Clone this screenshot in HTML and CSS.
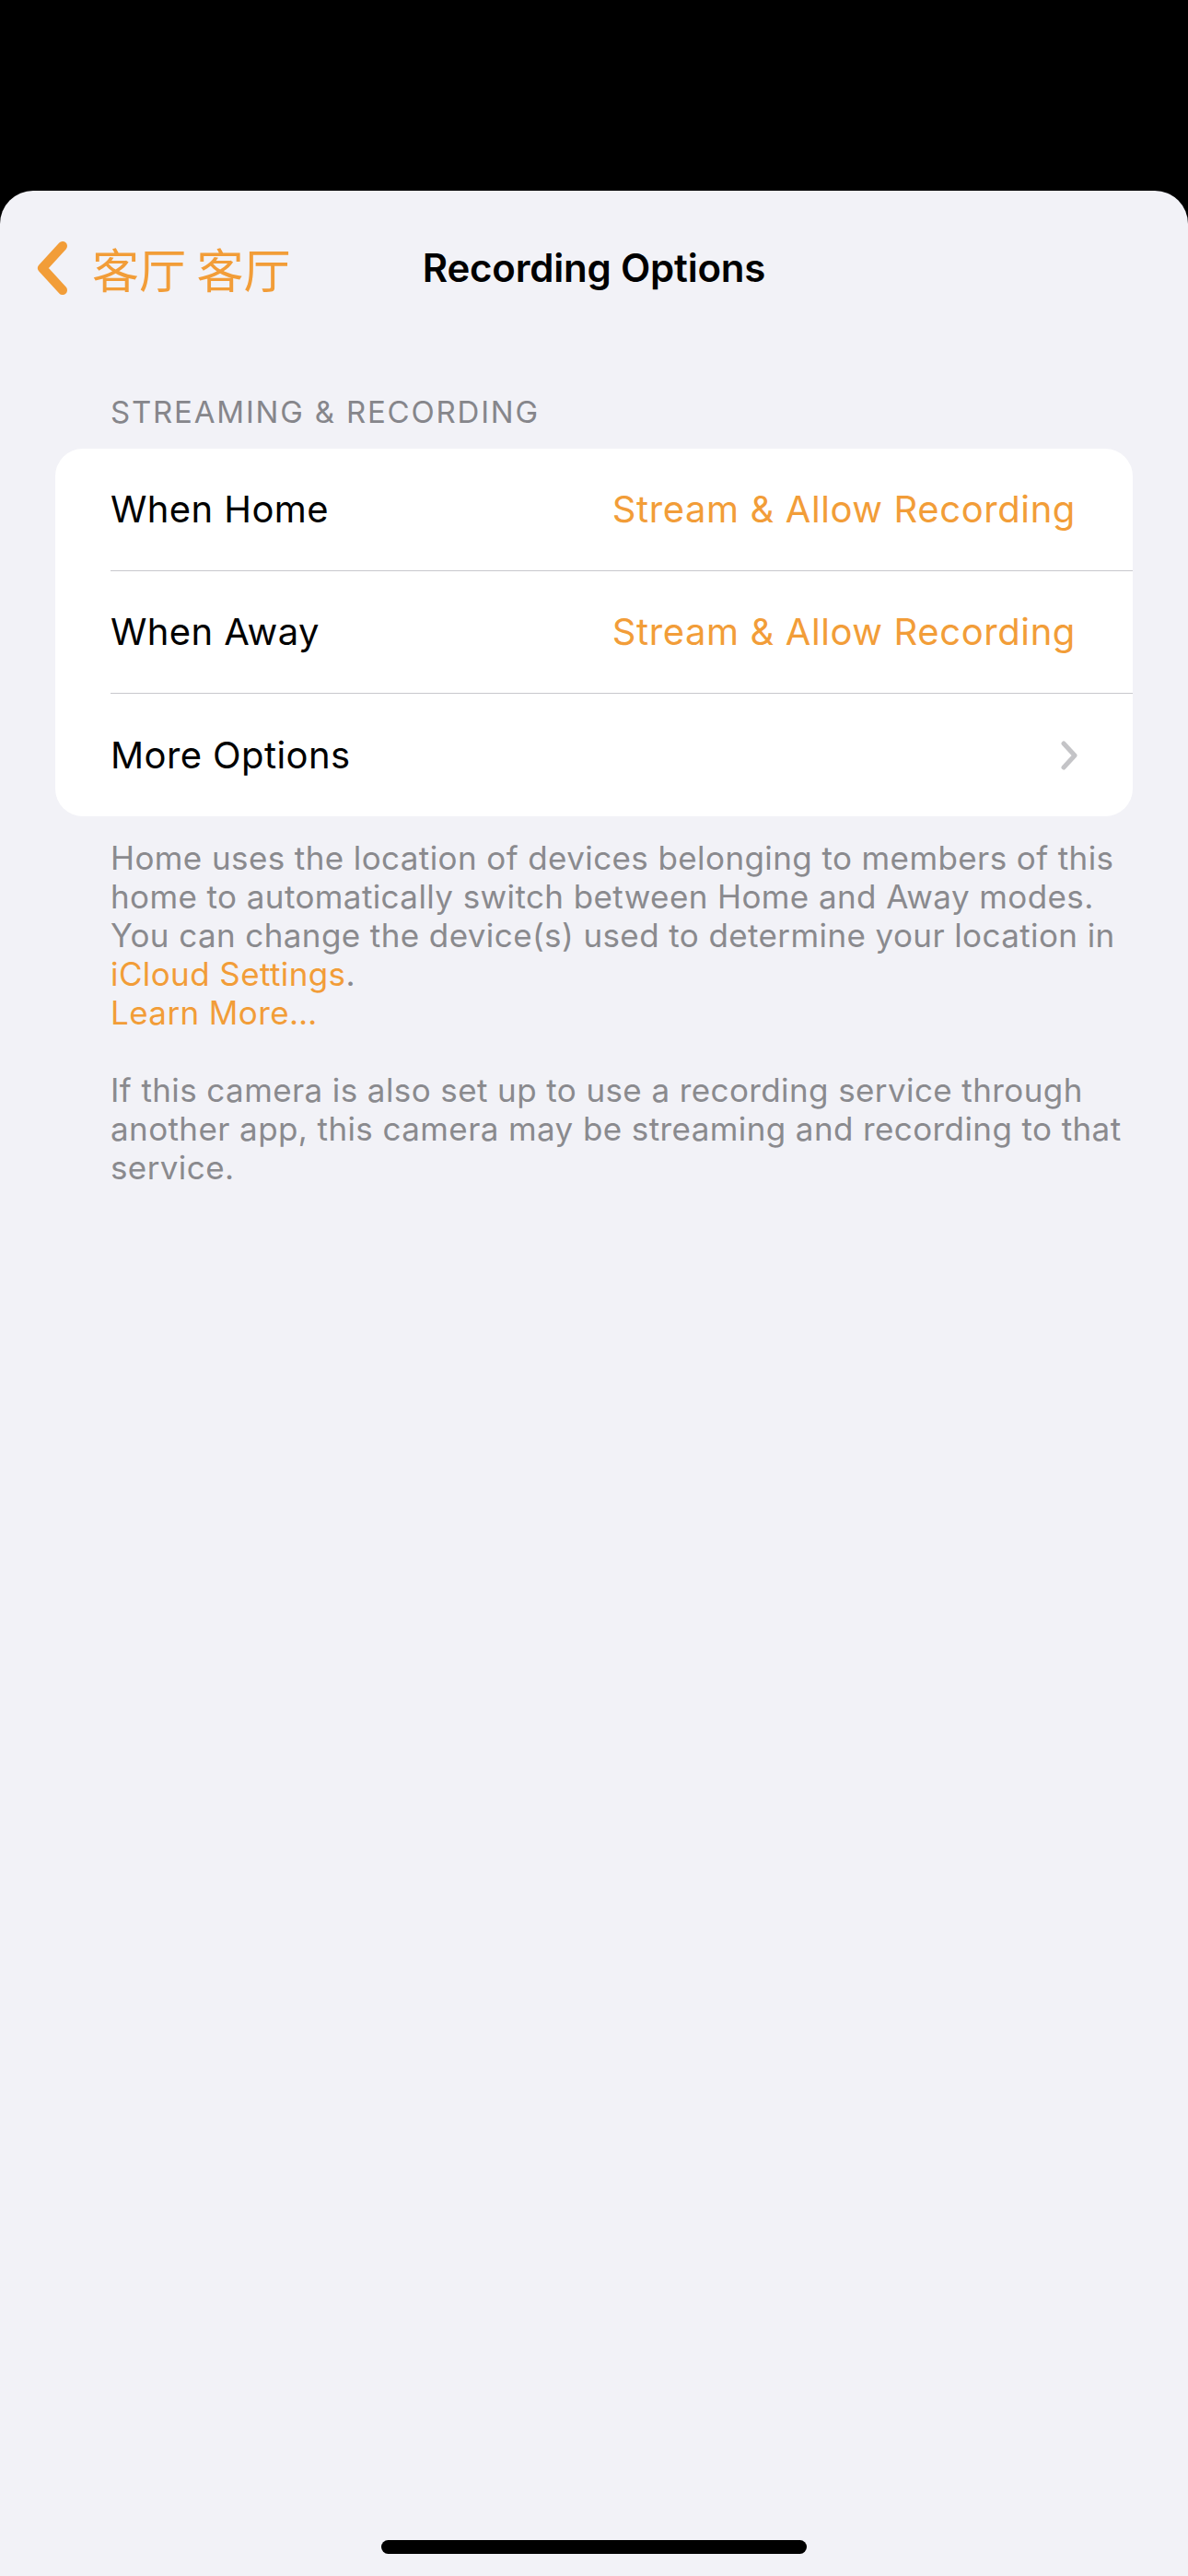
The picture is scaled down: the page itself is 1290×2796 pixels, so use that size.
FILE: index.html
```html
<!DOCTYPE html>
<html lang="en">
<head>
<meta charset="utf-8">
<title>Recording Options</title>
<link rel="stylesheet" href="styles.css">
</head>
<body>
<div class="top-area"></div>
<main class="sheet">
  <header class="nav">
    <div class="back">
      <svg class="back-chevron" width="36" height="58" viewBox="0 0 36 58">
        <polyline points="29,5 7,29 29,53" fill="none" stroke="#F29D38" stroke-width="10" stroke-linecap="round" stroke-linejoin="round"/>
      </svg>
      <span class="back-label">客厅 客厅</span>
    </div>
    <h1 class="nav-title">Recording Options</h1>
    <div></div>
  </header>

  <section class="group">
    <h2 class="group-header">STREAMING &amp; RECORDING</h2>
    <div class="card">
      <div class="row">
        <span class="row-label">When Home</span>
        <span class="row-value">Stream &amp; Allow Recording</span>
      </div>
      <div class="row">
        <span class="row-label">When Away</span>
        <span class="row-value">Stream &amp; Allow Recording</span>
      </div>
      <div class="row">
        <span class="row-label">More Options</span>
        <svg class="row-chevron" width="21" height="32" viewBox="0 0 21 32">
          <polyline points="4,3 16,16 4,29" fill="none" stroke="#C4C4C7" stroke-width="5" stroke-linecap="round" stroke-linejoin="round"/>
        </svg>
      </div>
    </div>
    <div class="footer">
      <p>Home uses the location of devices belonging to members of this<br>home to automatically switch between Home and Away modes.<br>You can change the device(s) used to determine your location in<br><span class="link">iCloud Settings</span>.<br><span class="link">Learn More…</span></p>
      <p>If this camera is also set up to use a recording service through<br>another app, this camera may be streaming and recording to that<br>service.</p>
    </div>
  </section>

  <div class="home-indicator"></div>
</main>
</body>
</html>
```

FILE: styles.css
```css
* {
  box-sizing: border-box;
}

html, body {
  margin: 0;
  padding: 0;
  background: #000;
}

body {
  width: 1290px;
  min-height: 2796px;
  font-family: Inter, "Noto Sans", "Noto Sans CJK SC", sans-serif;
  color: #000;
}

.top-area {
  height: 207px;
  background: #000;
}

.sheet {
  background: #F2F2F7;
  border-radius: 36px 36px 0 0;
  min-height: 2589px;
  display: flex;
  flex-direction: column;
}

.nav {
  height: 168px;
  display: grid;
  grid-template-columns: 1fr auto 1fr;
  align-items: center;
}

.back {
  display: flex;
  align-items: center;
  padding-left: 39px;
  gap: 25px;
}

.back-chevron {
  display: block;
}

.back-label {
  font-family: "Noto Sans CJK SC", sans-serif;
  font-size: 51px;
  line-height: 60px;
  color: #F29D38;
}

.nav-title {
  margin: 0;
  font-size: 42px;
  font-weight: 600;
  line-height: 50px;
  letter-spacing: -0.2px;
}

.group {
  padding-top: 52px;
}

.group-header {
  margin: 0 0 20px 0;
  padding-left: 120px;
  font-size: 33px;
  font-weight: 400;
  line-height: 40px;
  color: #86868B;
  letter-spacing: 1.8px;
}

.card {
  margin: 0 60px;
  background: #fff;
  border-radius: 30px;
  overflow: hidden;
}

.row {
  margin-left: 60px;
  padding-right: 62px;
  height: 133px;
  display: flex;
  align-items: center;
  justify-content: space-between;
  border-bottom: 1px solid #C8C8CC;
}

.row:last-child {
  border-bottom: none;
}

.row-label {
  font-size: 40px;
  line-height: 50px;
  letter-spacing: 0.4px;
  color: #000;
}

.row-value {
  font-size: 40px;
  line-height: 50px;
  letter-spacing: 0.6px;
  color: #F29D38;
}

.row-chevron {
  display: block;
  margin-right: -4px;
}

.footer {
  margin-top: 24px;
  padding: 0 30px 0 120px;
  font-size: 35px;
  line-height: 42px;
  letter-spacing: 0.4px;
  color: #8A8A8E;
  white-space: nowrap;
}

.footer p {
  margin: 0 0 42px 0;
}

.link {
  color: #F29D38;
}

.home-indicator {
  margin: auto auto 24px auto;
  width: 462px;
  height: 15px;
  border-radius: 8px;
  background: #000;
}
```
